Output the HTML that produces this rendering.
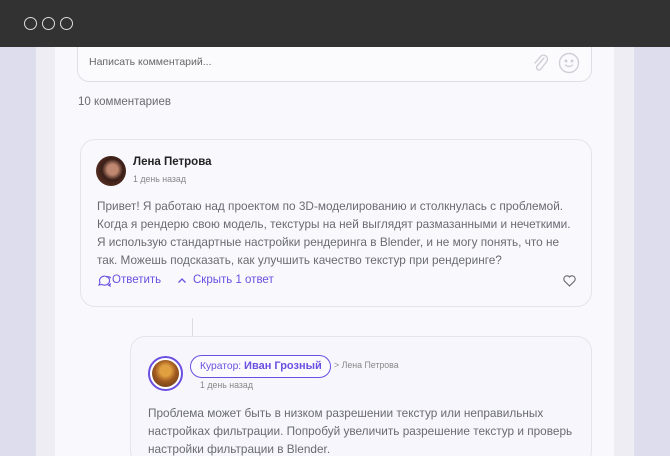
<!DOCTYPE html>
<html><head><meta charset="utf-8"><style>
*{margin:0;padding:0;box-sizing:border-box}
html,body{width:670px;height:456px;overflow:hidden}
body{background:#dedded;font-family:"Liberation Sans","Noto Sans CJK SC",sans-serif;position:relative}
.abs{position:absolute}
.top{left:0;top:0;width:670px;height:47px;background:#323232}
.dot{width:13px;height:13px;border:1.3px solid #ddd;border-radius:50%;top:17px}
.strip{top:47px;height:409px;background:#ededf3}
.panel{left:55px;top:47px;width:559px;height:409px;background:#f9f9fd}
.card{border:1px solid #e4e4ec;border-radius:15px;background:#f8f8fd}
.txt{font-size:11.8px;line-height:18px;color:#6a6a72}
.purple{color:#6b4fe0}
</style></head><body>
<div class="abs strip" style="left:36px;width:19px"></div>
<div class="abs strip" style="left:614px;width:20px"></div>
<div class="abs panel"></div>
<div class="abs" style="left:77px;top:30px;width:515px;height:52px;border:1px solid #dedee6;border-radius:12px;background:#fbfbfe"></div>
<div class="abs" style="left:89px;top:56px;font-size:10.5px;color:#666">Написать комментарий...</div>
<svg class="abs" style="left:530px;top:52px" width="22" height="22" viewBox="0 0 22 22" fill="none" stroke="#cfcfd6" stroke-width="1.4" stroke-linecap="round"><path d="M14 6 L7 14 a2.5 2.5 0 0 0 4 3 L17 9 a4 4 0 0 0 -6 -5 L5 11"/></svg>
<svg class="abs" style="left:558px;top:52px" width="22" height="22" viewBox="0 0 22 22" fill="none" stroke="#cfcfd6" stroke-width="1.4"><circle cx="11" cy="11" r="9.5"/><circle cx="8" cy="9" r=".8" fill="#cfcfd6"/><circle cx="14" cy="9" r=".8" fill="#cfcfd6"/><path d="M7.5 13 q3.5 3 7 0" stroke-linecap="round"/></svg>
<div class="abs" style="left:78px;top:96px;font-size:11.5px;color:#6a6a72">10 комментариев</div>

<div class="abs card" style="left:80px;top:139px;width:512px;height:168px"></div>
<div class="abs" style="left:96px;top:156px;width:30px;height:30px;border-radius:50%;background:radial-gradient(circle at 55% 45%,#c08870 0 22%,#3a1f18 45%,#6e3a28 100%)"></div>
<div class="abs" style="left:133px;top:156px;font-size:11.5px;font-weight:bold;color:#222">Лена Петрова</div>
<div class="abs" style="left:133px;top:174px;font-size:8.8px;color:#888">1 день назад</div>
<div class="abs txt" style="left:97px;top:197px;width:478px">Привет! Я работаю над проектом по 3D-моделированию и столкнулась с проблемой. Когда я рендерю свою модель, текстуры на ней выглядят размазанными и нечеткими. Я использую стандартные настройки рендеринга в Blender, и не могу понять, что не так. Можешь подсказать, как улучшить качество текстур при рендеринге?</div>
<svg class="abs" style="left:97px;top:274px" width="14" height="13" viewBox="0 0 14 13" fill="none" stroke="#6b4fe0" stroke-width="1.1"><path d="M2 11 L3 8.5 A5 4.5 0 1 1 5 10.5 Z"/><path d="M9 3 A4.5 4 0 0 1 12.5 10.5 L13 12 L11 11"/></svg>
<div class="abs purple" style="left:112px;top:274px;font-size:11.5px">Ответить</div>
<svg class="abs" style="left:177px;top:277px" width="10" height="7" viewBox="0 0 10 7" fill="none" stroke="#6b4fe0" stroke-width="1.3"><path d="M1.5 5.5 L5 2 L8.5 5.5"/></svg>
<div class="abs purple" style="left:193px;top:274px;font-size:11.5px">Скрыть 1 ответ</div>
<svg class="abs" style="left:563px;top:275px" width="13" height="12" viewBox="0 0 13 12" fill="none" stroke="#666" stroke-width="1.1"><path d="M6.5 11 L1.5 6 A2.8 2.8 0 0 1 6.5 2 A2.8 2.8 0 0 1 11.5 6 Z"/></svg>

<div class="abs" style="left:192px;top:318px;width:1px;height:18px;background:#dcdce4"></div>
<div class="abs card" style="left:130px;top:336px;width:462px;height:130px;background:#f6f6fc"></div>
<div class="abs" style="left:148px;top:356px;width:35px;height:35px;border-radius:50%;border:2px solid #6b4fe0;background:#fff;padding:2px"><div style="width:100%;height:100%;border-radius:50%;background:radial-gradient(circle at 50% 40%,#e0a040 0 25%,#a05a20 50%,#5a3418 100%)"></div></div>
<div class="abs" style="left:190px;top:355px;width:141px;height:23px;border:1.3px solid #6b4fe0;border-radius:12px;background:#fbfbff"></div>
<div class="abs purple" style="left:200px;top:360px;font-size:10.3px">Куратор: <b style="font-size:11px">Иван Грозный</b></div>
<div class="abs" style="left:334px;top:360px;font-size:8.8px;color:#888">&gt; Лена Петрова</div>
<div class="abs" style="left:200px;top:380px;font-size:8.8px;color:#888">1 день назад</div>
<div class="abs txt" style="left:148px;top:404px;width:430px">Проблема может быть в низком разрешении текстур или неправильных настройках фильтрации. Попробуй увеличить разрешение текстур и проверь настройки фильтрации в Blender.</div>

<div class="abs top"></div>
<div class="abs dot" style="left:24px"></div>
<div class="abs dot" style="left:42px"></div>
<div class="abs dot" style="left:60px"></div>
</body></html>
